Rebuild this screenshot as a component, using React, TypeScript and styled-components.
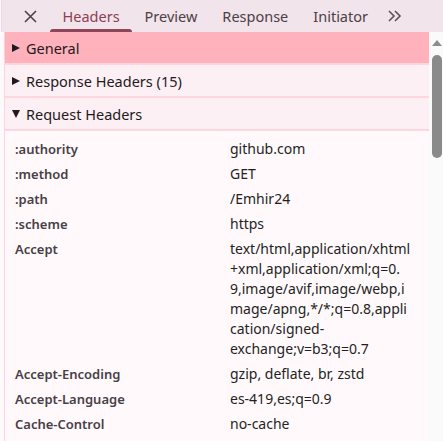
import styled, { createGlobalStyle } from "styled-components";

interface TabProps {
  active?: boolean;
}

interface SectionProps {
  highlight?: boolean;
}

interface ArrowProps {
  open?: boolean;
}

const GlobalStyle = createGlobalStyle`
  body {
    margin: 0;
    background: #fff9fc;
    font-family: "Noto Sans", "Open Sans", sans-serif;
  }
`;

const Panel = styled.div`
  width: 443px;
  height: 441px;
  overflow: hidden;
  display: flex;
  flex-direction: column;
  background: #fff9fc;
`;

const TabBar = styled.div`
  height: 32px;
  flex: none;
  display: flex;
  align-items: stretch;
  background: #f1e4ea;
  border-left: 1px solid #fbd5df;
  margin-left: 1px;
  box-sizing: border-box;
`;

const CloseButton = styled.div`
  width: 48px;
  display: flex;
  align-items: center;
  justify-content: center;
  color: #4a4448;
  padding-left: 8px;
  box-sizing: border-box;
`;

const Tab = styled.div<TabProps>`
  position: relative;
  padding: 0 12.5px;
  display: flex;
  align-items: center;
  font-size: 14.5px;
  color: ${(props) => (props.active ? "#8d3e55" : "#4a4046")};

  &::after {
    content: "";
    display: ${(props) => (props.active ? "block" : "none")};
    position: absolute;
    left: 0;
    right: 0;
    bottom: 0;
    height: 3px;
    border-radius: 3px 3px 0 0;
    background: #8d4559;
  }
`;

const MoreButton = styled.div`
  display: flex;
  align-items: center;
  padding-left: 6px;
  color: #5a5257;
`;

const Body = styled.div`
  flex: 1;
  display: flex;
  min-height: 0;
`;

const Content = styled.div`
  flex: 1;
  margin-left: 4px;
  border-left: 1px solid #fbd5df;
  display: flex;
  flex-direction: column;
  min-width: 0;
`;

const SectionHeader = styled.div<SectionProps>`
  flex: none;
  height: 33px;
  box-sizing: border-box;
  display: flex;
  align-items: center;
  padding-left: 6px;
  font-size: 14.5px;
  color: #1f1a1d;
  background: ${(props) => (props.highlight ? "#ffb1bc" : "#fcf0f4")};
  border-bottom: 2px solid #ffd5de;
`;

const ArrowBox = styled.span`
  width: 9px;
  height: 9px;
  margin-right: 6px;
  display: flex;
  align-items: center;
  justify-content: center;
`;

const Arrow = styled.span<ArrowProps>`
  width: 0;
  height: 0;
  ${(props) =>
    props.open
      ? `border-left: 4.5px solid transparent;
         border-right: 4.5px solid transparent;
         border-top: 8px solid #1f1a1d;`
      : `border-top: 4.5px solid transparent;
         border-bottom: 4.5px solid transparent;
         border-left: 8px solid #1f1a1d;`}
`;

const HeaderList = styled.div`
  padding-top: 5px;
`;

const HeaderRow = styled.div`
  display: grid;
  grid-template-columns: 215px 190px;
  padding: 2.5px 0 2.5px 10px;
  line-height: 20px;
`;

const HeaderName = styled.div`
  font-size: 13px;
  font-weight: 600;
  color: #474045;
`;

const HeaderValue = styled.div`
  font-size: 14px;
  color: #241f22;
  white-space: pre-line;
  overflow-wrap: anywhere;
`;

const Scrollbar = styled.div`
  width: 14px;
  flex: none;
  background: #fafafa;
  display: flex;
  flex-direction: column;
  align-items: center;
  padding-top: 8px;
  gap: 9px;
  padding-left: 2px;
  box-sizing: border-box;
`;

const ScrollUp = styled.div`
  width: 0;
  height: 0;
  border-left: 5px solid transparent;
  border-right: 5px solid transparent;
  border-bottom: 6px solid #8d8d8d;
`;

const Thumb = styled.div`
  width: 10px;
  height: 103px;
  border-radius: 5px;
  background: #8a8a8a;
`;

// the long Accept value keeps the panel's own wrap points
const requestHeaders: [string, string][] = [
  [":authority", "github.com"],
  [":method", "GET"],
  [":path", "/Emhir24"],
  [":scheme", "https"],
  [
    "Accept",
    "text/html,application/xhtml\n+xml,application/xml;q=0.\n9,image/avif,image/webp,i\nmage/apng,*/*;q=0.8,appli\ncation/signed-\nexchange;v=b3;q=0.7",
  ],
  ["Accept-Encoding", "gzip, deflate, br, zstd"],
  ["Accept-Language", "es-419,es;q=0.9"],
  ["Cache-Control", "no-cache"],
];

const App = () => {
  return (
    <Panel>
      <GlobalStyle />
      <TabBar>
        <CloseButton>
          <svg width="13" height="13" viewBox="0 0 13 13">
            <path d="M1 1 L12 12 M12 1 L1 12" stroke="currentColor" strokeWidth="1.6" />
          </svg>
        </CloseButton>
        <Tab active>Headers</Tab>
        <Tab>Preview</Tab>
        <Tab>Response</Tab>
        <Tab>Initiator</Tab>
        <MoreButton>
          <svg width="16" height="12" viewBox="0 0 16 12">
            <path d="M2 1 L7 6 L2 11 M8 1 L13 6 L8 11" stroke="currentColor" strokeWidth="1.6" fill="none" />
          </svg>
        </MoreButton>
      </TabBar>
      <Body>
        <Content>
          <SectionHeader highlight>
            <ArrowBox>
              <Arrow />
            </ArrowBox>
            General
          </SectionHeader>
          <SectionHeader>
            <ArrowBox>
              <Arrow />
            </ArrowBox>
            Response Headers (15)
          </SectionHeader>
          <SectionHeader>
            <ArrowBox>
              <Arrow open />
            </ArrowBox>
            Request Headers
          </SectionHeader>
          <HeaderList>
            {requestHeaders.map(([name, value]) => (
              <HeaderRow key={name}>
                <HeaderName>{name}</HeaderName>
                <HeaderValue>{value}</HeaderValue>
              </HeaderRow>
            ))}
          </HeaderList>
        </Content>
        <Scrollbar>
          <ScrollUp />
          <Thumb />
        </Scrollbar>
      </Body>
    </Panel>
  );
};

export default App;
